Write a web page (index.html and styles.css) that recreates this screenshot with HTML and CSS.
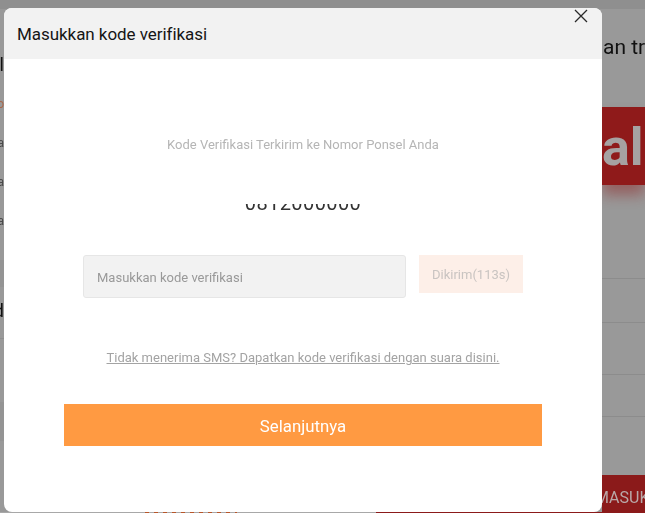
FILE: index.html
```html
<!DOCTYPE html>
<html lang="id">
<head>
<meta charset="utf-8">
<title>Masukkan kode verifikasi</title>
<link rel="stylesheet" href="styles.css">
</head>
<body>
<div class="page">
  <div class="topstrip"></div>
  <div class="under">
    <div class="left">
      <div class="frag frag-l">l</div>
      <div class="frag frag-o">o</div>
      <div class="frag frag-a">a</div>
      <div class="frag frag-a">a</div>
      <div class="frag frag-a">a</div>
      <div class="lband lb1"></div>
      <div class="frag frag-d">d</div>
      <div class="lrule"></div>
      <div class="lband lb2"></div>
    </div>
    <div class="right">
      <div class="r-title">an tr</div>
      <div class="r-banner">al</div>
      <div class="r-rule r1"></div>
      <div class="r-rule r2"></div>
      <div class="r-rule r3"></div>
      <div class="r-rule r4"></div>
      <div class="r-cta">MASUK</div>
    </div>
  </div>
  <div class="bottom-row">
    <div class="bottom-gap"></div>
    <div class="bottom-link"></div>
    <div class="bottom-cta"></div>
  </div>
</div>
<section class="modal">
  <header class="modal-head">
    <h1 class="modal-title">Masukkan kode verifikasi</h1>
    <svg class="close" viewBox="0 0 14 14" width="14" height="14"><path d="M1 1 13 13M13 1 1 13" fill="none" stroke="#2a2a2a" stroke-width="1.3"/></svg>
  </header>
  <div class="modal-body">
    <p class="sent">Kode Verifikasi Terkirim ke Nomor Ponsel Anda</p>
    <div class="phone-clip"><div class="phone">0812000000</div></div>
    <div class="code-row">
      <div class="code-input">Masukkan kode verifikasi</div>
      <div class="resend">Dikirim(113s)</div>
    </div>
    <a class="voice" href="#">Tidak menerima SMS? Dapatkan kode verifikasi dengan suara disini.</a>
    <button class="next" type="button">Selanjutnya</button>
  </div>
</section>
</body>
</html>
```
FILE: styles.css
```css
* { box-sizing: border-box; }
html, body { margin: 0; padding: 0; }
body {
  width: 645px;
  height: 513px;
  overflow: hidden;
  position: relative;
  background: #999;
  font-family: Roboto, "Liberation Sans", sans-serif;
}
.page { width: 645px; height: 513px; display: flex; flex-direction: column; overflow: hidden; filter: blur(.3px); }
.topstrip { height: 9px; background: #8f8f8f; flex: none; }
.under { flex: 1; display: flex; justify-content: space-between; min-height: 0; }
.left { width: 4px; overflow: hidden; padding-top: 46px; }
.frag { font-size: 18px; line-height: 20px; height: 39px; white-space: nowrap; color: #3f3f3f; direction: rtl; width: 4px; }
.frag-l { color: #111; }
.frag-o { color: #a8664a; font-size: 12px; }
.frag-a { font-size: 12px; color: #4a4a4a; }
.frag-d { color: #111; margin-top: 14px; height: 26px; }
.lband { background: #949494; }
.lb1 { margin-top: 10px; height: 27px; }
.lb2 { margin-top: 63px; height: 39px; }
.lrule { height: 1px; margin-top: 11px; background: #8f8f8f; }
.right { width: 43px; overflow: hidden; }
.r-title { font-size: 21px; line-height: 24px; color: #111; white-space: nowrap; margin-top: 26px; padding-left: 1px; }
.r-banner {
  height: 78px;
  margin-top: 48px;
  background: #8f1a1a;
  box-shadow: 0 10px 14px rgba(143, 26, 26, .45);
  color: #a6a2a2;
  font-size: 52px;
  font-weight: 700;
  line-height: 82px;
  text-align: right;
  padding-right: 2px;
  overflow: hidden;
  white-space: nowrap;
}
.r-rule { height: 1px; background: #8c8c8c; }
.r1 { margin-top: 93px; }
.r2 { margin-top: 43px; }
.r3 { margin-top: 51px; }
.r4 { margin-top: 41px; }
.r-cta { margin-top: 58px; height: 37px; background: #8b1a1a; color: #b9a8a8; font-size: 16px; line-height: 46px; white-space: nowrap; text-indent: -7px; }
.bottom-row { flex: none; height: 1px; display: flex; }
.bottom-gap { width: 145px; background: #a8a8a8; }
.bottom-link { width: 231px; background: linear-gradient(90deg, transparent 92px, #a8a8a8 92px), repeating-linear-gradient(90deg, #b8562a 0 4px, #a8a8a8 4px 9px); }
.bottom-cta { flex: 1; background: #8b1a1a; }
.modal {
  position: absolute;
  left: 4px;
  top: 8px;
  width: 598px;
  height: 504px;
  background: #fff;
  border-radius: 8px;
  overflow: hidden;
  filter: blur(.3px);
}
.modal-head { height: 51px; background: #f2f2f2; display: flex; align-items: center; padding-left: 13px; position: relative; }
.modal-title { margin: 0; font-size: 17px; line-height: 24px; font-weight: 400; color: #151515; letter-spacing: -.05px; }
.close { position: absolute; right: 14px; top: 1px; }
.modal-body { display: flex; flex-direction: column; align-items: center; }
.sent { margin: 77px 0 0; font-size: 13px; line-height: 18px; color: #b5b5b5; }
.phone-clip { margin-top: 50px; height: 10px; overflow: hidden; width: 200px; text-align: center; }
.phone { font-size: 20px; line-height: 24px; margin-top: -13px; color: #333; letter-spacing: .4px; }
.code-row { display: flex; align-items: flex-start; gap: 13px; margin-top: 40.7px; width: 440px; }
.code-input { width: 323px; height: 43.6px; background: #f2f2f2; border: 1px solid #e6e6e6; border-radius: 3px; padding-left: 13px; font-size: 13px; line-height: 43px; color: #999; }
.resend { width: 104px; height: 38.6px; background: #fdefe8; font-size: 13px; line-height: 39px; text-align: center; color: #c9c4c1; }
.voice { margin-top: 51px; font-size: 13px; line-height: 18px; color: #a3a3a3; text-decoration: underline; }
.next { margin-top: 37.1px; width: 478px; height: 42px; background: #ff9a42; border: 0; border-radius: 0; color: #fff; font: 400 16.8px/40px Roboto, "Liberation Sans", sans-serif; padding: 2px 0 0; }
```
